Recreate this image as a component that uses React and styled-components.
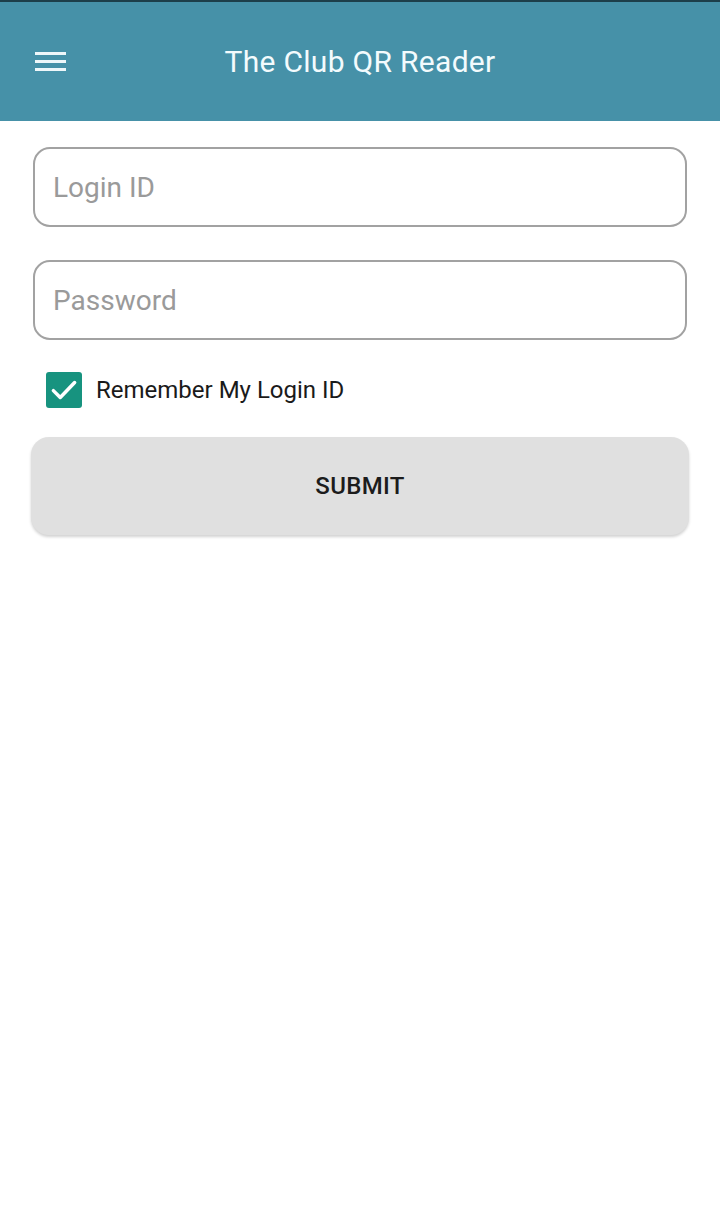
import styled, { createGlobalStyle } from 'styled-components';

const GlobalStyle = createGlobalStyle`
    body {
        margin: 0;
        background: #ffffff;
        font-family: Roboto, "Noto Sans", sans-serif;
    }
`;

const Page = styled.div`
    display: flex;
    flex-direction: column;
    width: 720px;
    min-height: 1231px;
    background: #ffffff;
`;

const Header = styled.header`
    display: flex;
    align-items: center;
    height: 119px;
    border-top: 2px solid #1d3f4a;
    background-color: #4691a8;
`;

const MenuButton = styled.button`
    display: flex;
    flex-direction: column;
    gap: 5px;
    margin-left: 35px;
    padding: 0;
    border: none;
    background: none;
`;

const MenuLine = styled.span`
    display: block;
    width: 31px;
    height: 3px;
    background: #eef7fa;
`;

const Title = styled.h1`
    flex: 1;
    margin: 0 0 0 -66px;
    text-align: center;
    font-size: 30px;
    font-weight: 400;
    color: #f3fbfd;
    letter-spacing: 0.3px;
`;

const Form = styled.form`
    display: flex;
    flex-direction: column;
    padding: 26px 31px 0 31px;
`;

const Field = styled.input`
    box-sizing: border-box;
    width: 654px;
    height: 80px;
    margin: 0 0 ${({ gap }) => gap}px 2px;
    padding: 0 18px;
    border: 2px solid #a2a2a2;
    border-radius: 17px;
    background: #ffffff;
    font-family: Roboto, sans-serif;
    font-size: 28px;
    color: #333;
    outline: none;

    &::placeholder {
        color: #9a9a9a;
    }
`;

const CheckRow = styled.label`
    display: flex;
    align-items: center;
    gap: 14px;
    margin: 0 0 29px 15px;
    font-size: 24px;
    color: #1a1a1a;
`;

const CheckBox = styled.span`
    display: flex;
    align-items: center;
    justify-content: center;
    width: 36px;
    height: 36px;
    border-radius: 3px;
    background: #17937f;
`;

const SubmitButton = styled.button`
    width: 658px;
    height: 98px;
    border: none;
    border-radius: 18px;
    background: #e0e0e0;
    box-shadow: 0 2px 3px rgba(0, 0, 0, 0.18);
    font-family: Roboto, sans-serif;
    font-size: 24px;
    font-weight: 500;
    color: #1c1c1c;
    letter-spacing: 0.3px;
`;

function App() {
    return (
        <Page>
            <GlobalStyle />
            <Header>
                <MenuButton type="button" aria-label="menu">
                    <MenuLine />
                    <MenuLine />
                    <MenuLine />
                </MenuButton>
                <Title>The Club QR Reader</Title>
            </Header>
            <Form>
                <Field gap={33} placeholder="Login ID" />
                <Field gap={32} type="password" placeholder="Password" />
                <CheckRow>
                    <CheckBox>
                        <svg width="30" height="30" viewBox="0 0 24 24" fill="none">
                            <path d="M3.5 12.5l5.5 5.5L20.5 6" stroke="#ffffff" strokeWidth="2.8" strokeLinecap="round" strokeLinejoin="round" />
                        </svg>
                    </CheckBox>
                    Remember My Login ID
                </CheckRow>
                <SubmitButton type="button">SUBMIT</SubmitButton>
            </Form>
        </Page>
    );
}

export default App;
